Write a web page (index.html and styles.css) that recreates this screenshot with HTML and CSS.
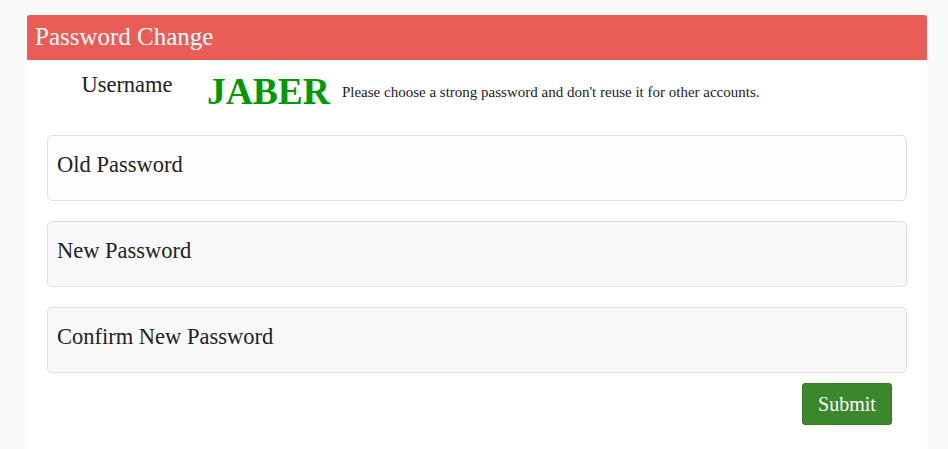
FILE: index.html
```html
<!DOCTYPE html>
<html>
<head>
<meta charset="utf-8">
<link rel="stylesheet" href="styles.css">
</head>
<body>
<div class="panel">
  <div class="panel-head">Password Change</div>
  <div class="panel-body">
    <div class="user-row">
      <div class="user-label">Username</div>
      <div class="user-name">JABER</div>
      <div class="user-hint">Please choose a strong password and don't reuse it for other accounts.</div>
    </div>
    <div class="fields">
      <div class="field field-first">Old Password</div>
      <div class="field">New Password</div>
      <div class="field">Confirm New Password</div>
    </div>
    <div class="actions">
      <button class="submit">Submit</button>
    </div>
  </div>
</div>
</body>
</html>
```
FILE: styles.css
```css
html, body {
  margin: 0;
  padding: 0;
  background: #fafafa;
  font-family: "Liberation Serif", "Times New Roman", serif;
  color: #222;
}
body {
  padding: 15px 21px 0 27px;
  height: 449px;
  box-sizing: border-box;
  overflow: hidden;
}
.panel {
  width: 900px;
  background: #fff;
  height: 434px;
  border-radius: 3px 3px 0 0;
}
.panel-head {
  background: #ea5c56;
  color: #fff;
  font-size: 25px;
  height: 45px;
  line-height: 44px;
  padding-left: 8px;
  border-radius: 3px 3px 0 0;
}
.panel-body {
  padding: 0 20px;
}
.user-row {
  display: flex;
  align-items: flex-start;
  height: 75px;
}
.user-label {
  width: 160px;
  text-align: center;
  font-size: 22.5px;
  line-height: 26px;
  padding-top: 12px;
}
.user-name {
  color: #009900;
  font-weight: bold;
  font-size: 37.5px;
  line-height: 40px;
  padding-top: 12px;
}
.user-hint {
  font-size: 15px;
  padding-top: 23px;
  padding-left: 12px;
  line-height: 18px;
}
.fields {
  display: flex;
  flex-direction: column;
  gap: 20px;
}
.field {
  height: 66px;
  box-sizing: border-box;
  border: 1px solid #dedede;
  border-radius: 5px;
  background: #f8f8f8;
  font-size: 22.5px;
  padding: 0 9px;
  line-height: 58px;
  color: #222;
}
.field-first {
  background: #fdfdfd;
}
.actions {
  display: flex;
  justify-content: flex-end;
  padding: 10px 15px 0 0;
}
.submit {
  width: 90px;
  height: 42px;
  background: #3a872c;
  border: 1px solid #347a27;
  border-radius: 3px;
  color: #fff;
  font-family: "Liberation Serif", "Times New Roman", serif;
  font-size: 20px;
  padding: 0;
}
```
